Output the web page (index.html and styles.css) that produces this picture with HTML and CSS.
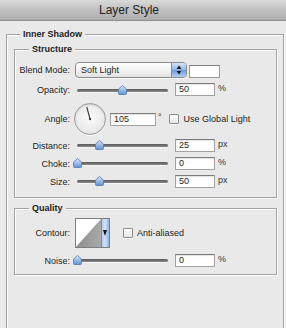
FILE: index.html
```html
<!DOCTYPE html>
<html>
<head>
<meta charset="utf-8">
<link rel="stylesheet" href="styles.css">
</head>
<body>
<div class="titlebar">Layer Style</div>
<div class="group outer">
  <span class="legend">Inner Shadow</span>
  <div class="group structure">
    <span class="legend">Structure</span>
    <div class="row row-blend">
      <span class="lbl">Blend Mode:</span>
      <div class="select">
        <span class="select-text">Soft Light</span>
        <span class="stepper">
          <svg width="14" height="14" viewBox="0 0 14 14"><path d="M7 2.5 L9.5 6 H4.5 Z M7 11.5 L9.5 8 H4.5 Z" fill="#1b1b1b"/></svg>
        </span>
      </div>
      <div class="swatch"></div>
    </div>
    <div class="row row-opacity">
      <span class="lbl">Opacity:</span>
      <div class="slider"><div class="track"><svg class="thumb" style="left:50%" width="9" height="10" viewBox="0 0 9 10"><defs><linearGradient id="tg1" x1="0" y1="0" x2="0" y2="1"><stop offset="0" stop-color="#d9e7f8"/><stop offset="1" stop-color="#5d93d6"/></linearGradient></defs><path d="M4.5 0.5 L8.5 4 V8.5 Q8.5 9.5 7.5 9.5 H1.5 Q0.5 9.5 0.5 8.5 V4 Z" fill="url(#tg1)" stroke="#5477ad" stroke-width="0.8"/></svg></div></div>
      <div class="field">50</div>
      <span class="unit">%</span>
    </div>
    <div class="row row-angle">
      <span class="lbl">Angle:</span>
      <div class="dial">
        <svg width="32" height="32" viewBox="0 0 32 32"><line x1="16" y1="16" x2="12.8" y2="4" stroke="#3a3a3a" stroke-width="1.1"/><circle cx="16" cy="16" r="1.2" fill="#3a3a3a"/></svg>
      </div>
      <div class="field field-angle">105</div>
      <span class="deg">°</span>
      <span class="check"></span>
      <span class="check-text">Use Global Light</span>
    </div>
    <div class="row row-distance">
      <span class="lbl">Distance:</span>
      <div class="slider"><div class="track"><svg class="thumb" style="left:25%" width="9" height="10" viewBox="0 0 9 10"><path d="M4.5 0.5 L8.5 4 V8.5 Q8.5 9.5 7.5 9.5 H1.5 Q0.5 9.5 0.5 8.5 V4 Z" fill="url(#tg1)" stroke="#5477ad" stroke-width="0.8"/></svg></div></div>
      <div class="field">25</div>
      <span class="unit">px</span>
    </div>
    <div class="row row-choke">
      <span class="lbl">Choke:</span>
      <div class="slider"><div class="track"><svg class="thumb" style="left:1%" width="9" height="10" viewBox="0 0 9 10"><path d="M4.5 0.5 L8.5 4 V8.5 Q8.5 9.5 7.5 9.5 H1.5 Q0.5 9.5 0.5 8.5 V4 Z" fill="url(#tg1)" stroke="#5477ad" stroke-width="0.8"/></svg></div></div>
      <div class="field">0</div>
      <span class="unit">%</span>
    </div>
    <div class="row row-size">
      <span class="lbl">Size:</span>
      <div class="slider"><div class="track"><svg class="thumb" style="left:25%" width="9" height="10" viewBox="0 0 9 10"><path d="M4.5 0.5 L8.5 4 V8.5 Q8.5 9.5 7.5 9.5 H1.5 Q0.5 9.5 0.5 8.5 V4 Z" fill="url(#tg1)" stroke="#5477ad" stroke-width="0.8"/></svg></div></div>
      <div class="field">50</div>
      <span class="unit">px</span>
    </div>
  </div>
  <div class="group quality">
    <span class="legend">Quality</span>
    <div class="row row-contour">
      <span class="lbl">Contour:</span>
      <div class="contour">
        <svg width="33" height="28" viewBox="0 0 33 28">
          <defs>
            <linearGradient id="cg" x1="0" y1="0" x2="1" y2="0"><stop offset="0" stop-color="#8e8e8e"/><stop offset="1" stop-color="#a9a9a9"/></linearGradient>
            <linearGradient id="bg" x1="0" y1="0" x2="1" y2="0"><stop offset="0" stop-color="#9fc0ea"/><stop offset="0.5" stop-color="#d5e5f8"/><stop offset="1" stop-color="#8fb3e3"/></linearGradient>
          </defs>
          <rect x="0" y="0" width="25" height="28" fill="#ffffff"/>
          <polygon points="0,28 25,0 25,28" fill="url(#cg)"/>
          <rect x="25" y="0" width="8" height="28" fill="url(#bg)"/>
          <line x1="25.5" y1="0" x2="25.5" y2="28" stroke="#6f8fbf" stroke-width="1"/>
          <path d="M27 11 H31 L29 17 Z" fill="#111"/>
        </svg>
      </div>
      <span class="check check-aa"></span>
      <span class="check-text">Anti-aliased</span>
    </div>
    <div class="row row-noise">
      <span class="lbl">Noise:</span>
      <div class="slider"><div class="track"><svg class="thumb" style="left:1%" width="9" height="10" viewBox="0 0 9 10"><path d="M4.5 0.5 L8.5 4 V8.5 Q8.5 9.5 7.5 9.5 H1.5 Q0.5 9.5 0.5 8.5 V4 Z" fill="url(#tg1)" stroke="#5477ad" stroke-width="0.8"/></svg></div></div>
      <div class="field">0</div>
      <span class="unit">%</span>
    </div>
  </div>
</div>
</body>
</html>
```
FILE: styles.css
```css
* { box-sizing: border-box; }

body {
  margin: 0;
  width: 286px;
  height: 328px;
  overflow: hidden;
  background: #e9e9e9;
  font-family: "Liberation Sans", Arial, sans-serif;
  font-size: 9px;
  color: #1c1c1c;
}

.titlebar {
  height: 21px;
  border-bottom: 1px solid #8d8d8d;
  background: linear-gradient(#dadada, #c4c4c4 40%, #aeaeae);
  font-size: 12px;
  line-height: 21px;
  text-align: center;
  padding-right: 28px;
  color: #1e1e1e;
}

.group {
  position: relative;
  border: 1px solid #a3a3a3;
  box-shadow: inset 1px 1px 0 #fbfbfb, 1px 1px 0 #fbfbfb;
}

.legend {
  position: absolute;
  top: -7px;
  left: 14px;
  padding: 0 3px;
  background: #e9e9e9;
  font-weight: bold;
  font-size: 9px;
  line-height: 12px;
}

.outer {
  margin: 13px 2px 0 6px;
  padding: 14px 6px 0 7px;
  height: 294px;
  border-bottom-width: 0;
}

.outer > .legend { left: 13px; }

.structure { padding: 12px 0 9px 0; }

.quality {
  margin-top: 10px;
  padding: 9px 0 7px 0;
}

.row {
  display: flex;
  align-items: center;
  height: 13px;
}

.lbl {
  flex: none;
  width: 55px;
  margin-right: 5px;
  text-align: right;
  white-space: nowrap;
}

.row-blend { height: 16px; }
.row-opacity { margin-top: 5px; }
.row-angle { height: 32px; margin-top: 7px; }
.row-distance { margin-top: 4px; }
.row-choke, .row-size { margin-top: 5px; }
.row-contour { height: 30px; }
.row-noise { margin-top: 6px; }

.select {
  display: flex;
  align-items: center;
  width: 112px;
  height: 16px;
  border: 1px solid #8b8b8b;
  border-radius: 4px;
  background: linear-gradient(#ffffff, #f2f2f2 50%, #e3e3e3);
  box-shadow: 0 1px 0 #f8f8f8;
  overflow: hidden;
}

.select-text {
  flex: 1;
  padding-left: 5px;
  line-height: 14px;
}

.stepper {
  display: flex;
  align-items: center;
  justify-content: center;
  width: 15px;
  height: 14px;
  border-left: 1px solid #6f8fc0;
  background: linear-gradient(#d2e3f8, #8eb6e8 50%, #6a9ddf 51%, #b3d0f3);
}

.swatch {
  align-self: flex-end;
  width: 31px;
  height: 13px;
  margin-left: 2px;
  border: 1px solid #9a9a9a;
  border-top-color: #7e7e7e;
  background: #ffffff;
}

.slider {
  position: relative;
  flex: none;
  width: 96px;
  height: 13px;
}

.track {
  position: absolute;
  left: 2px;
  right: 3px;
  top: 5px;
  height: 3px;
  border-radius: 2px;
  background: linear-gradient(#585858, #8a8a8a);
  box-shadow: 0 1px 0 #f6f6f6;
}

.row-opacity .track { top: 6px; }

.thumb {
  position: absolute;
  top: -4px;
  margin-left: -4.5px;
}

.field {
  flex: none;
  width: 40px;
  height: 13px;
  margin-left: 4px;
  padding-left: 3px;
  border: 1px solid #a2a2a2;
  border-top-color: #7c7c7c;
  background: #ffffff;
  box-shadow: inset 0 1px 1px rgba(0, 0, 0, 0.12);
  line-height: 11px;
}

.unit {
  align-self: flex-start;
  margin-left: 3px;
  line-height: 11px;
  color: #333;
}

.dial {
  flex: none;
  width: 32px;
  height: 32px;
  margin-left: -1px;
  border: 1px solid #9b9b9b;
  border-radius: 50%;
  background: radial-gradient(circle at 50% 45%, #fafafa, #ececec 60%, #d6d6d6);
  box-shadow: inset 0 1px 2px rgba(0, 0, 0, 0.12), 0 1px 0 #fafafa;
  overflow: hidden;
}

.dial svg { display: block; margin: -1px; }

.field-angle { width: 46px; }

.deg {
  align-self: flex-start;
  margin-top: 9px;
  margin-left: 2px;
  line-height: 11px;
}

.check {
  flex: none;
  width: 10px;
  height: 10px;
  margin-left: 7px;
  border: 1px solid #8d8d8d;
  border-radius: 1px;
  background: linear-gradient(#ffffff, #e6e6e6);
  box-shadow: 0 1px 0 #f8f8f8;
}

.check-text {
  margin-left: 5px;
  white-space: nowrap;
}

.contour {
  flex: none;
  width: 35px;
  height: 30px;
  border: 1px solid #7d7d7d;
  background: #fff;
}

.contour svg { display: block; }

.check-aa { margin-left: 13px; }
.row-contour .check-text { margin-left: 4px; }
```
